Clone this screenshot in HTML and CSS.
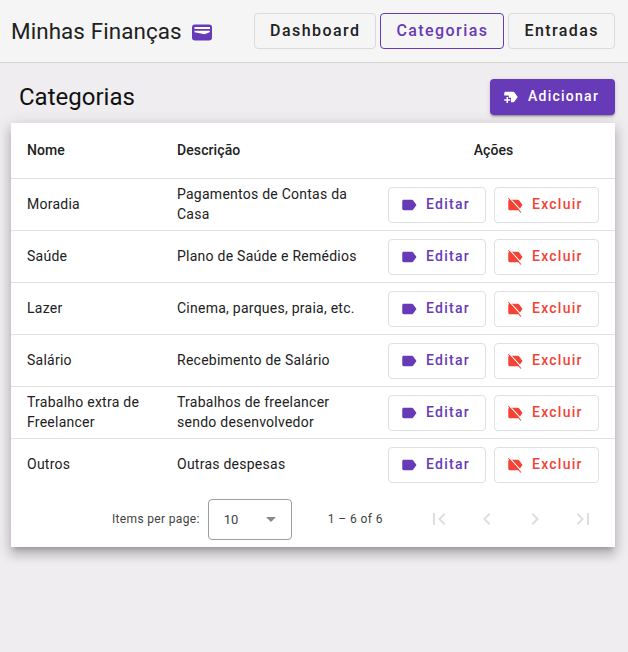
FILE: index.html
```html
<!DOCTYPE html>
<html lang="pt">
<head>
<meta charset="utf-8">
<title>Minhas Finanças</title>
<link rel="stylesheet" href="styles.css">
</head>
<body>
<header class="toolbar">
  <div class="brand">
    <span class="brand-name">Minhas Finanças</span>
    <svg class="brand-icon" viewBox="0 0 20 17"><rect x="0" y="0.5" width="20" height="16" rx="3" fill="#673ab7"/><rect x="2.5" y="3" width="15.5" height="2" fill="#fff"/><path d="M2.5 6.8H18L17.6 8.2L12.5 10.2L2.5 8.2z" fill="#fff"/></svg>
  </div>
  <nav class="nav">
    <button class="nav-btn">Dashboard</button>
    <button class="nav-btn nav-active">Categorias</button>
    <button class="nav-btn">Entradas</button>
  </nav>
</header>
<main class="content">
  <div class="title-row">
    <h1 class="page-title">Categorias</h1>
    <button class="add-btn"><svg class="icon" viewBox="0 0 24 24"><path fill="currentColor" d="M21 12l-4.37 6.16c-.37.52-.98.84-1.63.84h-3v-6H9v-3H3V7c0-1.1.9-2 2-2h10c.65 0 1.26.32 1.63.84L21 12zm-10 3H8v-3H6v3H3v2h3v3h2v-3h3v-2z"/></svg>Adicionar</button>
  </div>
  <section class="card">
    <table class="grid">
      <colgroup><col class="col-name"><col class="col-desc"><col class="col-actions"></colgroup>
      <thead>
        <tr><th>Nome</th><th>Descrição</th><th class="th-actions">Ações</th></tr>
      </thead>
      <tbody id="rows">
        <tr><td>Moradia</td><td>Pagamentos de Contas da Casa</td><td class="actions"></td></tr>
        <tr><td>Saúde</td><td>Plano de Saúde e Remédios</td><td class="actions"></td></tr>
        <tr><td>Lazer</td><td>Cinema, parques, praia, etc.</td><td class="actions"></td></tr>
        <tr><td>Salário</td><td>Recebimento de Salário</td><td class="actions"></td></tr>
        <tr><td>Trabalho extra de Freelancer</td><td>Trabalhos de freelancer sendo desenvolvedor</td><td class="actions"></td></tr>
        <tr><td>Outros</td><td>Outras despesas</td><td class="actions"></td></tr>
      </tbody>
    </table>
    <footer class="paginator">
      <span class="per-page">Items per page:</span>
      <div class="select"><span>10</span><i class="caret"></i></div>
      <span class="range">1 – 6 of 6</span>
      <div class="pager">
        <svg class="pg" viewBox="0 0 24 24"><path fill="currentColor" d="M18.41 16.59L13.82 12l4.59-4.59L17 6l-6 6 6 6zM6 6h2v12H6z"/></svg>
        <svg class="pg" viewBox="0 0 24 24"><path fill="currentColor" d="M15.41 7.41L14 6l-6 6 6 6 1.41-1.41L10.83 12z"/></svg>
        <svg class="pg" viewBox="0 0 24 24"><path fill="currentColor" d="M10 6L8.59 7.41 13.17 12l-4.58 4.59L10 18l6-6z"/></svg>
        <svg class="pg" viewBox="0 0 24 24"><path fill="currentColor" d="M5.59 7.41L10.18 12l-4.59 4.59L7 18l6-6-6-6zM16 6h2v12h-2z"/></svg>
      </div>
    </footer>
  </section>
</main>
<template id="action-tpl">
  <div class="action-wrap">
    <button class="row-btn edit"><svg class="icon" viewBox="0 0 24 24"><path fill="currentColor" d="M17.63 5.84C17.27 5.33 16.67 5 16 5L5 5.01C3.9 5.01 3 5.9 3 7v10c0 1.1.9 1.99 2 1.99L16 19c.67 0 1.27-.33 1.63-.84L22 12l-4.37-6.16z"/></svg>Editar</button>
    <button class="row-btn del"><svg class="icon" viewBox="0 0 24 24"><path fill="currentColor" d="M17.63 5.84C17.27 5.33 16.67 5 16 5L5 5.01C3.9 5.01 3 5.9 3 7v10c0 1.1.9 1.99 2 1.99L16 19c.67 0 1.27-.33 1.63-.84L22 12l-4.37-6.16z"/><path d="M4.6 2.4L21 20.6" stroke="#fff" stroke-width="1.5" fill="none"/><path d="M3.2 3L20 22" stroke="currentColor" stroke-width="1.5" fill="none"/></svg>Excluir</button>
  </div>
</template>
<script src="app.js"></script>
</body>
</html>
```
FILE: app.js
```js
const tpl = document.getElementById('action-tpl');
document.querySelectorAll('#rows .actions').forEach(function (cell) {
  cell.appendChild(tpl.content.cloneNode(true));
});
```
FILE: styles.css
```css
* { box-sizing: border-box; }
html, body { margin: 0; padding: 0; }
body {
  background: #efedef;
  color: #212121;
  font-family: Roboto, sans-serif;
  font-size: 14px;
  height: 652px;
  overflow: hidden;
}
button { font-family: inherit; cursor: pointer; }

.toolbar {
  height: 63px;
  background: #f5f5f5;
  border-bottom: 1px solid #d3d3d3;
  display: flex;
  align-items: center;
  justify-content: space-between;
  padding: 0 13px 1px 11px;
}
.brand { display: flex; align-items: center; gap: 10px; }
.brand-name { font-size: 22.4px; line-height: 32px; color: #212121; letter-spacing: 0.1px; }
.brand-icon { width: 20px; height: 17px; margin-top: 3px; }
.nav { display: flex; gap: 4px; }
.nav-btn {
  height: 36px;
  padding: 0 15px;
  background: transparent;
  border: 1px solid #dadada;
  border-radius: 4px;
  font-size: 16px;
  font-weight: 500;
  letter-spacing: 1.43px;
  color: #212121;
}
.nav-active { border-color: #673ab7; color: #673ab7; }

.content { padding: 16px 13px 0 11px; }
.title-row {
  display: flex;
  align-items: center;
  justify-content: space-between;
  height: 36px;
  margin-bottom: 8px;
}
.page-title {
  margin: 0 0 0 8px;
  font-size: 24px;
  font-weight: 400;
  line-height: 36px;
  color: #111;
}
.icon { width: 18px; height: 18px; flex: none; margin-top: 1px; }
.add-btn {
  display: flex;
  align-items: center;
  gap: 8px;
  height: 36px;
  width: 125px;
  padding: 0 12px 2px;
  background: #673ab7;
  color: #fff;
  border: 0;
  border-radius: 4px;
  font-size: 14px;
  font-weight: 500;
  letter-spacing: 1.25px;
  box-shadow: 0 3px 1px -2px rgba(0,0,0,.2), 0 2px 2px 0 rgba(0,0,0,.14), 0 1px 5px 0 rgba(0,0,0,.12);
}

.card {
  background: #fff;
  box-shadow: 0 5px 5px -3px rgba(0,0,0,.2), 0 8px 10px 1px rgba(0,0,0,.14), 0 3px 14px 2px rgba(0,0,0,.12);
}
.grid { width: 100%; border-collapse: collapse; table-layout: fixed; }
.col-name { width: 166px; }
.col-desc { width: 211px; }
.grid th {
  height: 55px;
  padding: 0 0 0 16px;
  text-align: left;
  font-weight: 500;
  font-size: 14px;
  letter-spacing: 0.1px;
  color: #212121;
  border-bottom: 1px solid #e0e0e0;
}
.grid th + th { padding-left: 0; }
.grid th.th-actions { text-align: center; padding-right: 16px; }
.grid td {
  height: 52px;
  padding: 0 16px;
  line-height: 20px;
  letter-spacing: 0.25px;
  color: #212121;
  border-bottom: 1px solid #e0e0e0;
}
.grid td + td { padding-left: 0; }
.grid td.actions { padding-top: 2px; }
.grid tbody tr:last-child td { border-bottom: 0; }
.action-wrap { display: flex; gap: 8px; }
.row-btn {
  display: flex;
  align-items: center;
  gap: 8px;
  height: 36px;
  padding: 0 15px 2px 11px;
  background: #fff;
  border: 1px solid #e0e0e0;
  border-radius: 4px;
  font-size: 14px;
  font-weight: 500;
  letter-spacing: 1.25px;
}
.edit { color: #673ab7; width: 98px; }
.del { color: #f44336; width: 105px; }

.paginator {
  height: 57px;
  display: flex;
  align-items: center;
  padding-left: 101px;
  font-size: 12px;
  color: #424242;
}
.per-page { margin-right: 8px; letter-spacing: 0.34px; }
.select {
  width: 84px;
  height: 41px;
  margin-top: 1px;
  border: 1px solid #9e9e9e;
  border-radius: 4px;
  display: flex;
  align-items: center;
  justify-content: space-between;
  padding: 0 15px;
  font-size: 13px;
}
.caret {
  width: 0;
  height: 0;
  border-left: 5px solid transparent;
  border-right: 5px solid transparent;
  border-top: 5px solid #8a8a8a;
}
.range { margin-left: 36px; letter-spacing: 0.4px; }
.pager { display: flex; gap: 24px; margin-left: 44px; color: #dedede; }
.pg { width: 24px; height: 24px; }
```
